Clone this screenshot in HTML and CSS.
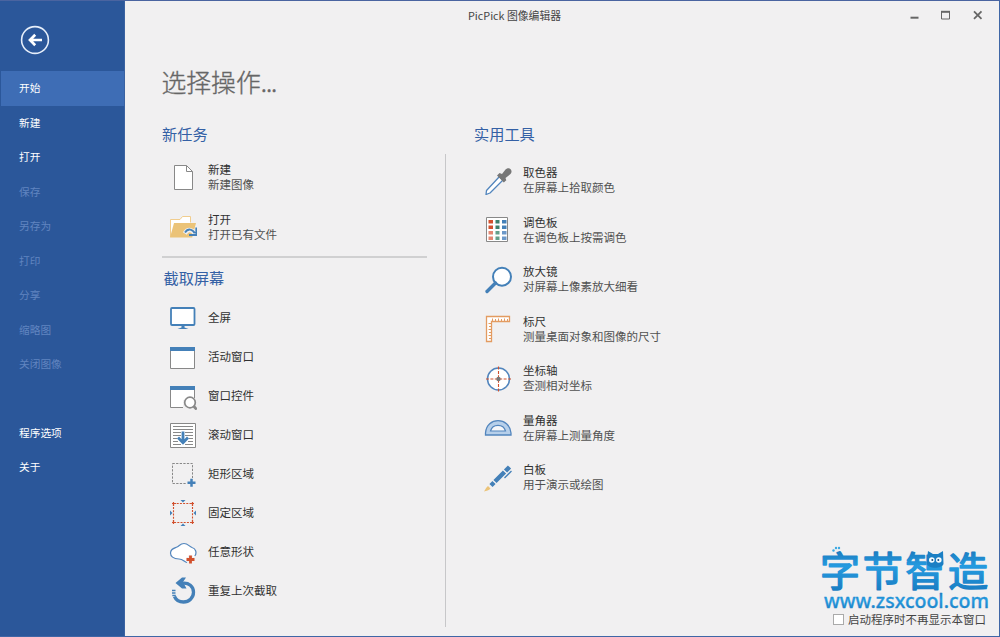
FILE: index.html
```html
<!DOCTYPE html>
<html lang="zh-CN">
<head>
<meta charset="utf-8">
<title>PicPick 图像编辑器</title>
<link rel="stylesheet" href="styles.css">
</head>
<body>
<div class="window">
  <nav class="sidebar">
    <svg class="back" viewBox="0 0 30 30"><circle cx="15" cy="15" r="13.4" fill="none" stroke="#e6eefa" stroke-width="1.6"/><path d="M22 15H10M15.2 9.8L10 15l5.2 5.2" fill="none" stroke="#fff" stroke-width="2.7"/></svg>
    <ul class="menu">
      <li class="active">开始</li><li>新建</li><li>打开</li>
      <li class="off">保存</li><li class="off">另存为</li><li class="off">打印</li><li class="off">分享</li><li class="off">缩略图</li><li class="off">关闭图像</li>
    </ul>
    <ul class="menu extra"><li>程序选项</li><li>关于</li></ul>
  </nav>
  <main class="main">
    <header class="titlebar">
      <span class="caption">PicPick 图像编辑器</span>
      <svg class="controls" viewBox="0 0 76 14"><g fill="none" stroke="#666"><path d="M1.500 9.700h8" stroke-width="2"/><path d="M32.500 3.500h8v7.500h-8z"/><path d="M32 3.800h9" stroke-width="2"/><path d="M65 3.300l7.500 7.500M72.500 3.300L65 10.800" stroke-width="1.800"/></g></svg>
    </header>
    <h1>选择操作<span class="dots">...</span></h1>
    <div class="columns">
      <section class="left">
        <h2>新任务</h2>
        <div class="row tall"><svg class="icon" viewBox="0 0 28 28"><path d="M5.500 1.500h12l6 6v18h-18z" fill="#fff" stroke="#888"/><path d="M17.500 1.500v6h6" fill="none" stroke="#888"/></svg><p>新建<span>新建图像</span></p></div>
        <div class="row tall"><svg class="icon" viewBox="0 0 28 28"><path d="M1.500 24V6.500h9.500l2.500-3h8v6" fill="#fff" stroke="#f1cd8e"/><path d="M1 24.500L5 10h22l-3.800 14.500z" fill="#ebc378"/><path d="M15.800 20.500c3-5 7.500-4 10 0" fill="none" stroke="#f1f0f1" stroke-width="4.500"/><path d="M16 19.500c3-4.500 7.500-3.500 9.800.8M27.300 14.500V22H20" fill="none" stroke="#4480b8" stroke-width="1.900"/></svg><p>打开<span>打开已有文件</span></p></div>
        <hr>
        <h2 class="capture">截取屏幕</h2>
        <div class="row"><svg class="icon" viewBox="0 0 28 28"><rect x="2" y="4" width="23.500" height="17" rx="1" fill="#fff" stroke="#4480b8" stroke-width="1.800"/><path d="M12.500 21.500h3v2l4 1.500h-11l4-1.500z" fill="#4480b8"/></svg><p>全屏</p></div>
        <div class="row"><svg class="icon" viewBox="0 0 28 28"><path d="M1.500 4.500h24v21h-24z" fill="#fff" stroke="#888"/><path d="M1 4h25v4H1z" fill="#4480b8"/></svg><p>活动窗口</p></div>
        <div class="row"><svg class="icon" viewBox="0 0 28 28"><path d="M1.500 4.500h24v21h-24z" fill="#fff" stroke="#888"/><path d="M1 4h25v4H1z" fill="#4480b8"/><path d="M14 18v8h8l5 4 1-5-2-9z" fill="#f1f0f1"/><circle cx="21" cy="20.500" r="5.300" fill="#fff" stroke="#888" stroke-width="1.700"/><path d="M24.500 24l3.300 3.500" stroke="#888" stroke-width="2.800"/></svg><p>窗口控件</p></div>
        <div class="row"><svg class="icon" viewBox="0 0 28 28"><path d="M1.500 2.500h25v24h-25z" fill="#fff" stroke="#888"/><path d="M4 5.500h20M4 8.500h20M4 11.500h8m4 0h8M4 14.500h8m4 0h8M4 17.500h4m12 0h4M4 20.500h5m10 0h5M4 23.500h8m4 0h8" stroke="#888"/><path d="M14 10.500v10M9 16.500l5 5.300 5-5.300" fill="none" stroke="#4480b8" stroke-width="2.800"/></svg><p>滚动窗口</p></div>
        <div class="row"><svg class="icon" viewBox="0 0 28 28"><path d="M3.500 3.500h20v20h-20z" fill="none" stroke="#888" stroke-dasharray="2.300 1.300"/><path d="M18 18h9v9h-9z" fill="#f1f0f1"/><path d="M18.500 22.800h8M22.500 18.800v8" stroke="#4480b8" stroke-width="2.500"/></svg><p>矩形区域</p></div>
        <div class="row"><svg class="icon" viewBox="0 0 28 28"><path d="M4.500 4.500h19v19h-19z" fill="none" stroke="#d2502d" stroke-width="1.100" stroke-dasharray="2 1.200"/><path d="M3 4.500h4m14 0h4M3 23.500h4m14 0h4M4.500 3v4m19-4v4m-19 14v4m19-4v4" stroke="#d2502d" stroke-width="1.200"/><path d="M11.500 1h5L14 3.500zM11.500 27h5L14 24.500zM1 11.500v5L3.500 14zM27 11.500v5L24.500 14z" fill="#4480b8"/></svg><p>固定区域</p></div>
        <div class="row"><svg class="icon" viewBox="0 0 28 28"><path d="M18 24.500c-3-1-4-3.500-8-3.500C4 21 1.500 18 1.500 15c0-4 3-4.500 6.500-6 2.500-1 3-3.500 7-3.500s5 3 8 4c4 1 5 5.500 2.800 8.500" fill="#fff" stroke="#5285bd" stroke-width="1.200"/><path d="M17.500 21.500h8M21.500 17.500v8" stroke="#f1f0f1" stroke-width="5"/><path d="M17.500 21.500h8M21.500 17.500v8" stroke="#d2502d" stroke-width="2.800"/></svg><p>任意形状</p></div>
        <div class="row"><svg class="icon" viewBox="0 0 28 28"><path d="M13 6.300c7-1 11.500 3.200 11.500 9 0 5.500-4.500 9.700-10 9.700-4.500 0-7.500-2-9-5.500" fill="none" stroke="#4480b8" stroke-width="3.300"/><path d="M6.500 6L13 .5h4l-3 4.500 3.500 6.500H13z" fill="#4480b8"/><path d="M3 13.500h3.500M3 16h3.500M3.300 18.500h3.500" stroke="#4480b8" stroke-width="1.300"/></svg><p>重复上次截取</p></div>
      </section>
      <section class="right">
        <h2>实用工具</h2>
        <div class="row tall"><svg class="icon" viewBox="0 0 28 28"><path d="M15.500 9.500l3.500 3.500L6 26l-4 1.500.5-4z" fill="#fff" stroke="#5285bd" stroke-width="1.300" stroke-linejoin="round"/><path d="M13 8.500l2.500-2.500 2.500 1 3.500-4.500c4-3.500 8 1 5 4.500L21.500 11l.8 2.300-2.500 2.200z" fill="#777"/></svg><p>取色器<span>在屏幕上拾取颜色</span></p></div>
        <div class="row tall"><svg class="icon" viewBox="0 0 28 28"><path d="M2.500 1.500h21v24h-21z" fill="#fff" stroke="#888"/><g transform="translate(-.5 -.5)"><path d="M5 4.500h4.500v3.500H5zM5 10h4.500v3.500H5z" fill="#d2502d"/><path d="M5 15.500h4.500v3.500H5zM5 21h4.500v3.500H5z" fill="#e48773"/><path d="M12 4.500h4v3.500h-4zM12 10h4v3.500h-4z" fill="#3e806c"/><path d="M12 15.500h4v3.500h-4zM12 21h4v3.500h-4z" fill="#65a08c"/><path d="M18.500 4.500h4.500v3.500h-4.500zM18.500 10h4.500v3.500h-4.500z" fill="#4480b8"/><path d="M18.500 15.500h4.500v3.500h-4.500zM18.500 21h4.500v3.500h-4.500z" fill="#6c98c9"/></g></svg><p>调色板<span>在调色板上按需调色</span></p></div>
        <div class="row tall"><svg class="icon" viewBox="0 0 28 28"><circle cx="18" cy="10.700" r="9" fill="#fff" stroke="#4480b8" stroke-width="2"/><path d="M11.500 17L3 25.500" stroke="#4480b8" stroke-width="3.400" stroke-linecap="round"/></svg><p>放大镜<span>对屏幕上像素放大细看</span></p></div>
        <div class="row tall"><svg class="icon" viewBox="0 0 28 28"><path d="M2.500 1.500h23v5h-18v20h-5z" fill="#fff" stroke="#e39b61" stroke-width="1.300"/><path d="M8.500 6V3.500m3 2.500V4m3 2V3.500m3 2.500V4m3 2V3.500m3 2.500V4M7 8.500H4.500M7 11.500H5M7 14.500H4.500M7 17.500H5M7 20.500H4.500M7 23.500H5" stroke="#e39b61"/></svg><p>标尺<span>测量桌面对象和图像的尺寸</span></p></div>
        <div class="row tall"><svg class="icon" viewBox="0 0 28 28"><circle cx="14.500" cy="14" r="11" fill="#fff" stroke="#5285bd" stroke-width="1.500"/><path d="M2 14h25M14.500 1.500v25" stroke="#d2502d" stroke-width="1.100" stroke-dasharray="3 1.400"/><circle cx="14.500" cy="14" r="2.200" fill="#777"/></svg><p>坐标轴<span>查测相对坐标</span></p></div>
        <div class="row tall"><svg class="icon" viewBox="0 0 28 28"><path d="M1.500 21v-2c1-16.500 24-16.500 25.500 0v2z" fill="#b6cfea" stroke="#5285bd" stroke-width="1.300"/><path d="M6.500 17c2-7.500 13-7.500 15 0z" fill="#f5f6f9" stroke="#5285bd" stroke-width="1.200"/></svg><p>量角器<span>在屏幕上测量角度</span></p></div>
        <div class="row tall"><svg class="icon" viewBox="0 0 28 28"><path d="M7 21.500l3-3M11 17.500l9.500-9.500M21.500 7L25.500 3" stroke="#4480b8" stroke-width="4.500"/><path d="M20.500 14l7-7" stroke="#4480b8" stroke-width="1.300"/><path d="M0 27.500c1.500-2 2-4 4-5.500l2.500 2.500C5 26.500 2.500 26.500 0 27.500z" fill="#ebc378"/></svg><p>白板<span>用于演示或绘图</span></p></div>
        <footer class="footer">
          <svg class="brand" viewBox="0 0 176 68">
            <defs><linearGradient id="blue" x1="0" y1="0" x2="0" y2="1"><stop offset="0" stop-color="#1565a8"/><stop offset=".45" stop-color="#259be0"/><stop offset="1" stop-color="#1674ba"/></linearGradient></defs>
            <g fill="url(#blue)" stroke="url(#blue)" stroke-linejoin="round">
              <text class="brand-name" x="3" y="40" textLength="168">字节智造</text>
              <text class="brand-url" x="7" y="62" textLength="165" lengthAdjust="spacingAndGlyphs">www.zsxcool.com</text>
            </g>
            <path d="M110 13l1-8 5 3h5l5-3 .5 13c-2 5-15 5-16.500 0z" fill="#1b7fc4"/><circle cx="114.800" cy="14" r="2.800" fill="#f3fbff"/><circle cx="121.800" cy="14" r="2.800" fill="#f3fbff"/><circle cx="115.300" cy="14" r="1" fill="#174f86"/><circle cx="121.300" cy="14" r="1" fill="#174f86"/>
            <g fill="#3ba8e2"><circle cx="19" cy="2" r="1.200"/><circle cx="22" cy="2" r="1.200"/><circle cx="16.500" cy="4.500" r="1.200"/></g>
          </svg>
          <label class="check"><i class="box"></i>启动程序时不再显示本窗口</label>
        </footer>
      </section>
    </div>
  </main>
</div>
</body>
</html>
```

FILE: styles.css
```css
* { box-sizing: border-box; margin: 0; padding: 0; }
body { font-family: "Noto Sans CJK SC", "Noto Sans", sans-serif; font-size: 11.5px; color: #303030; overflow: hidden; }
.window { display: flex; width: 1000px; height: 637px; background: #f1f0f1; border: 1px solid #3f66a6; border-left: 0; border-top-color: #4a64a0; }
.sidebar { width: 125px; height: 635px; background: #2b579a; padding-top: 24px; flex: none; border-right: 1px solid #3b62a1; }
.back { display: block; width: 30px; height: 30px; margin-left: 20px; }
.menu { list-style: none; margin-top: 16px; color: #fff; font-size: 10.7px; }
.menu li { height: 34.5px; line-height: 34.5px; padding-left: 18px; margin-left: 1px; }
.menu .active { background: #3e6db5; }
.menu .off { color: #6185c0; }
.menu.extra { margin-top: 34px; }
.main { flex: 1; display: flex; flex-direction: column; }
.titlebar { height: 30px; display: flex; padding-top: 7px; flex: none; }
.caption { width: 442px; padding-left: 343px; font-size: 10.8px; line-height: 15px; white-space: nowrap; color: #444; }
.controls { width: 76px; height: 14px; margin-left: 342px; }
h1 { font-size: 24.8px; font-weight: 300; line-height: 36px; height: 36px; margin: 32px 0 0 36.5px; color: #666; -webkit-text-stroke: .35px #666; }
.dots { letter-spacing: -1px; }
h2 { font-size: 15.2px; font-weight: 400; line-height: 22px; color: #3460a5; }
.columns { display: flex; margin-top: 22.5px; flex: 1; }
.left { width: 265px; margin-left: 37px; }
.left h2 { margin-bottom: 9.5px; }
.left h2.capture { margin: 8px 0 10.5px 1.5px; }
hr { border: 0; height: 2px; background: #d0d0d1; margin-top: 4px; }
.row { height: 39px; display: flex; align-items: center; padding-left: 7px; }
.row.tall { height: 49.5px; }
.icon { width: 28px; height: 28px; flex: none; margin-right: 11px; }
.row p { line-height: 15px; white-space: nowrap; padding-bottom: 2px; }
.row.tall p { padding-bottom: 1px; }
.row span { display: block; color: #505050; }
.right { flex: 1; margin-left: 18px; padding-left: 29px; display: flex; flex-direction: column; background: linear-gradient(#c7c7c9, #c7c7c9) 0 32px / 1px 473px no-repeat; }
.right h2 { margin-bottom: 12.5px; }
.right .row { padding-left: 10px; }
.footer { margin-top: auto; margin-left: auto; width: 182px; padding-bottom: 8px; display: flex; flex-direction: column; }
.brand { width: 176px; height: 68px; margin-bottom: -3px; overflow: visible; }
.brand-name { font-size: 40px; font-weight: 400; stroke-width: 1.5; }
.brand-url { font-family: "Noto Sans", sans-serif; font-size: 19px; font-weight: 500; stroke-width: .3; }
.check { display: flex; align-items: center; line-height: 17px; padding-left: 16px; white-space: nowrap; color: #444; }
.box { width: 11px; height: 11px; background: #fff; border: 1px solid #aaa; margin-right: 4px; flex: none; }
```
